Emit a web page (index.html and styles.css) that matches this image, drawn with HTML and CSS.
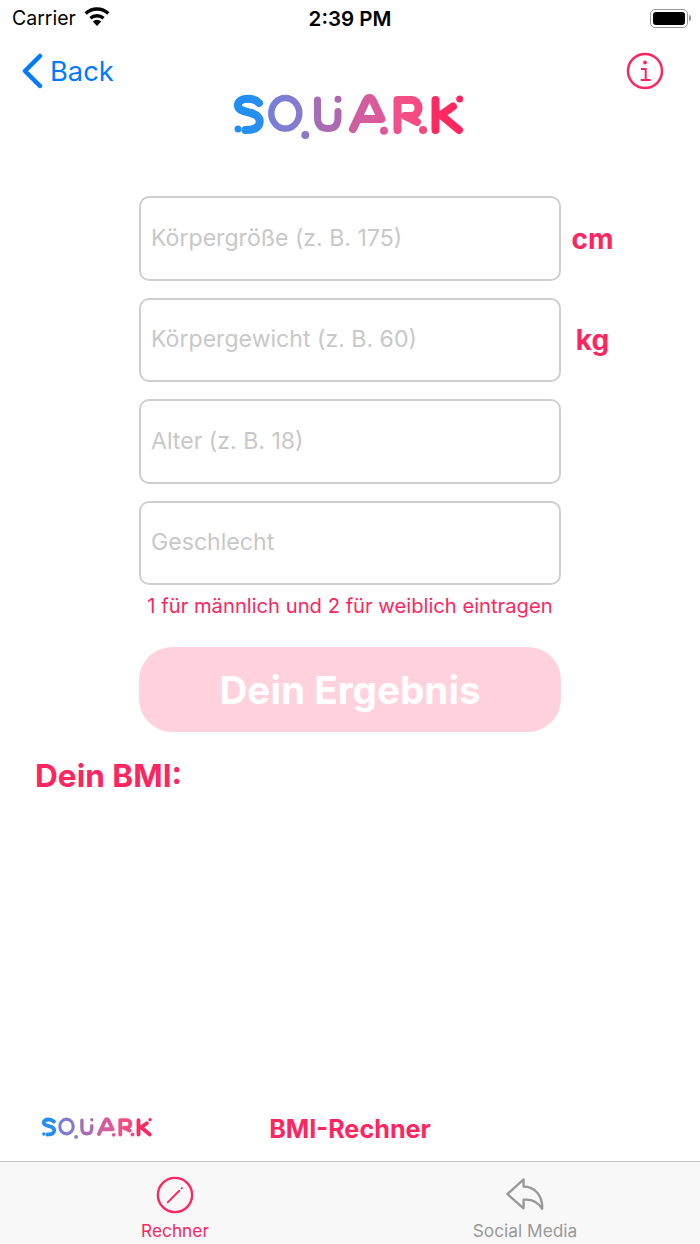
FILE: index.html
```html
<!DOCTYPE html>
<html lang="de">
<head>
    <meta charset="UTF-8">
    <meta name="viewport" content="width=device-width, initial-scale=1.0">
    <title>BMI-Rechner</title>
    <link rel="stylesheet" href="styles.css">
</head>
<body>
    <svg class="defs" width="0" height="0" aria-hidden="true">
        <defs>
            <linearGradient id="logoGrad" gradientUnits="userSpaceOnUse" x1="230" y1="0" x2="470" y2="0">
                <stop offset="0" stop-color="#1f8ff3"/>
                <stop offset="0.142" stop-color="#2a8ef0"/>
                <stop offset="0.158" stop-color="#747fda"/>
                <stop offset="0.31" stop-color="#8a79cc"/>
                <stop offset="0.35" stop-color="#a66cb6"/>
                <stop offset="0.467" stop-color="#ae68ae"/>
                <stop offset="0.508" stop-color="#cc5f9e"/>
                <stop offset="0.658" stop-color="#e0589a"/>
                <stop offset="0.69" stop-color="#f2508a"/>
                <stop offset="0.81" stop-color="#f7487f"/>
                <stop offset="0.84" stop-color="#ff2a62"/>
                <stop offset="1" stop-color="#ff2560"/>
            </linearGradient>
            <symbol id="squark" viewBox="230 94 240 47">
                <g fill="none" stroke="url(#logoGrad)" stroke-width="8" stroke-linecap="round" stroke-linejoin="round">
                    <path d="M259 103C256 100 252 98.800 248 98.800C241 98.800 237.500 102 238 106C238.500 110 243 111 249 112.500C256 114 260 117 259.700 122C259.300 128 253 130 245.500 130"/>
                    <ellipse stroke-width="6.500" cx="285.300" cy="113.300" rx="14" ry="15.300"/>
                    <path stroke-width="7" d="M317.500 100V117C317.500 126 322 128.500 328 128.500C334 128.500 338 126 338 117V111.500"/>
                    <path d="M353 129L366 101C368 97 371 97 373 101L381.500 119H360"/>
                    <path d="M397.500 130V100H411C421 100 421 116 411 116H405L417 122"/>
                    <path d="M435.500 100V130M453 106.500L441 115L459 130"/>
                </g>
                <g fill="url(#logoGrad)">
                    <circle cx="238" cy="129" r="3.500"/>
                    <circle cx="305.300" cy="135" r="4"/>
                    <circle cx="338" cy="99.300" r="3.500"/>
                    <circle cx="384" cy="130.700" r="4"/>
                    <circle cx="423" cy="130" r="4"/>
                    <circle cx="459.700" cy="99" r="3.500"/>
                </g>
            </symbol>
        </defs>
    </svg>

    <div class="statusbar">
        <div class="carrier">
            <span>Carrier</span>
            <svg class="wifi" viewBox="0 0 26 19">
                <path d="M13 19l-4.200-4.600a6 6 0 0 1 8.400 0z"/>
                <path d="M13 2.200c-4.800 0-9.200 1.900-12.500 5l2.300 2.500a15 15 0 0 1 20.400 0l2.300-2.500c-3.300-3.100-7.700-5-12.500-5z" transform="translate(0 -2)"/>
                <path d="M13 7.500a11 11 0 0 0-7.700 3.100l2.300 2.500a7.800 7.800 0 0 1 10.800 0l2.300-2.500a11 11 0 0 0-7.700-3.100z" transform="translate(0 -0.500)"/>
            </svg>
        </div>
        <div class="clock">2:39 PM</div>
        <div class="battery"><span class="battery-body"><span class="battery-fill"></span></span><span class="battery-cap"></span></div>
    </div>

    <div class="navbar">
        <div class="back">
            <svg class="chevron" viewBox="0 0 22 36"><path d="M19 3L4 18l15 15"/></svg>
            <span>Back</span>
        </div>
        <svg class="info" viewBox="0 0 38 38">
            <circle class="ring" cx="19" cy="19" r="17"/>
            <circle class="info-dot" cx="19" cy="10.500" r="1.900"/>
            <path class="info-stem" d="M15 17H19.700V28M14.700 28H24.700"/>
        </svg>
    </div>

    <svg class="logo" role="img" aria-label="SQUARK"><use href="#squark"/></svg>

    <form class="form">
        <div class="row">
            <input class="field" type="text" placeholder="Körpergröße (z. B. 175)">
            <span class="unit">cm</span>
        </div>
        <div class="row">
            <input class="field" type="text" placeholder="Körpergewicht (z. B. 60)">
            <span class="unit">kg</span>
        </div>
        <div class="row">
            <input class="field" type="text" placeholder="Alter (z. B. 18)">
        </div>
        <div class="row">
            <input class="field" type="text" placeholder="Geschlecht">
        </div>
    </form>
    <p class="hint">1 für männlich und 2 für weiblich eintragen</p>
    <button class="result-btn" type="button">Dein Ergebnis</button>
    <h2 class="bmi">Dein BMI:</h2>

    <div class="footer">
        <svg class="logo-small" role="img" aria-label="SQUARK"><use href="#squark"/></svg>
        <div class="footer-title">BMI-Rechner</div>
    </div>

    <div class="tabbar">
        <div class="tab active">
            <svg class="tab-icon" viewBox="0 0 40 40">
                <circle cx="20" cy="20" r="18"/>
                <path class="pencil" d="M12.300 27.700L24.500 15.500M27.300 12.700L27 13"/>
            </svg>
            <span>Rechner</span>
        </div>
        <div class="tab">
            <svg class="tab-icon" viewBox="0 0 40 40">
                <path d="M18.500 3.500L1.500 19L18.500 34V25C27 24 34 28 38 34.500C39 21 30 11 18.500 11Z"/>
            </svg>
            <span>Social Media</span>
        </div>
    </div>
</body>
</html>
```

FILE: styles.css
```css
* {
    box-sizing: border-box;
}
body {
    margin: 0;
    height: 1244px;
    display: flex;
    flex-direction: column;
    background: #fff;
    color: #ff2560;
    font-family: Inter, "Liberation Sans", sans-serif;
    overflow: hidden;
}
.defs {
    position: absolute;
}

/* status bar */
.statusbar {
    height: 36px;
    display: grid;
    grid-template-columns: 1fr auto 1fr;
    align-items: center;
    padding: 0 9px;
    color: #000;
}
.carrier {
    display: flex;
    align-items: center;
    gap: 8px;
    margin-left: 3px;
    font-size: 19.500px;
}
.wifi {
    width: 26px;
    height: 19px;
    margin-top: -3px;
    fill: #000;
}
.clock {
    font-size: 20.500px;
    font-weight: 600;
}
.battery {
    justify-self: end;
    display: flex;
    align-items: center;
    gap: 1px;
}
.battery-body {
    width: 38px;
    height: 19px;
    padding: 2px;
    border: 1.500px solid #999;
    border-radius: 5px;
}
.battery-fill {
    display: block;
    height: 100%;
    background: #000;
    border-radius: 3px;
}
.battery-cap {
    width: 2px;
    height: 6px;
    background: #999;
    border-radius: 0 2px 2px 0;
}

/* nav */
.navbar {
    height: 46px;
    margin-top: 12px;
    display: flex;
    align-items: center;
    justify-content: space-between;
    padding: 0 36px 0 21px;
}
.back {
    display: flex;
    align-items: center;
    gap: 7px;
    color: #007aff;
    font-size: 27.300px;
}
.chevron {
    width: 22px;
    height: 36px;
    fill: none;
    stroke: #007aff;
    stroke-width: 4.500;
    stroke-linecap: round;
    stroke-linejoin: round;
}
.info {
    width: 38px;
    height: 38px;
    fill: none;
    stroke: #ff2560;
}
.ring {
    stroke-width: 2.500;
}
.info-dot {
    fill: #ff2560;
    stroke: none;
}
.info-stem {
    stroke-width: 2;
}
.logo {
    display: block;
    flex: none;
    width: 240px;
    height: 47px;
    margin: 0 auto;
}

/* form */
.form {
    margin-top: 55px;
    padding-left: 139px;
    display: flex;
    flex-direction: column;
    gap: 17px;
}
.row {
    display: grid;
    grid-template-columns: 422px 62px;
    align-items: center;
}
.field {
    height: 84.500px;
    width: 100%;
    padding: 0 10px 1px;
    border: 2px solid #cfcfcf;
    border-radius: 10px;
    background: #fff;
    outline: none;
    font-family: inherit;
    font-size: 23.100px;
}
.field::placeholder {
    color: #c8c8c8;
    opacity: 1;
}
.unit {
    padding: 1px 0 0 1px;
    text-align: center;
    font-size: 28px;
    font-weight: 700;
}
.hint {
    width: 422px;
    margin: 9px 0 0 139px;
    text-align: center;
    font-size: 20.200px;
    line-height: 24px;
}
.result-btn {
    display: block;
    flex: none;
    width: 422px;
    height: 85px;
    margin: 29px 0 0 139px;
    border: 0;
    border-radius: 33px;
    background: #ffd2de;
    color: #fff;
    font-family: inherit;
    font-size: 38.700px;
    font-weight: 700;
}
.bmi {
    margin: 24px 0 0 35px;
    font-size: 31.600px;
    line-height: 40px;
    font-weight: 700;
}

/* footer row + tabs */
.footer {
    margin-top: auto;
    height: 44px;
    display: grid;
    grid-template-columns: 1fr auto 1fr;
    align-items: start;
}
.logo-small {
    display: block;
    width: 115px;
    height: 23px;
    margin-left: 40px;
}
.footer-title {
    font-size: 25.200px;
    line-height: 24px;
    font-weight: 700;
}
.tabbar {
    flex: none;
    height: 83px;
    display: grid;
    grid-template-columns: 1fr 1fr;
    border-top: 1px solid #c9c9c9;
    background: #f8f8f8;
}
.tab {
    display: flex;
    flex-direction: column;
    align-items: center;
    padding-top: 14px;
    gap: 7px;
    color: #999;
    font-size: 17.300px;
    line-height: 20px;
    font-weight: 400;
}
.tab-icon {
    width: 40px;
    height: 38px;
    fill: none;
    stroke: #999;
    stroke-width: 2.500;
    stroke-linecap: round;
    stroke-linejoin: round;
}
.tab.active {
    color: #ff2560;
}
.tab.active .tab-icon {
    stroke: #ff2560;
}
.pencil {
    stroke-width: 2;
}
```
